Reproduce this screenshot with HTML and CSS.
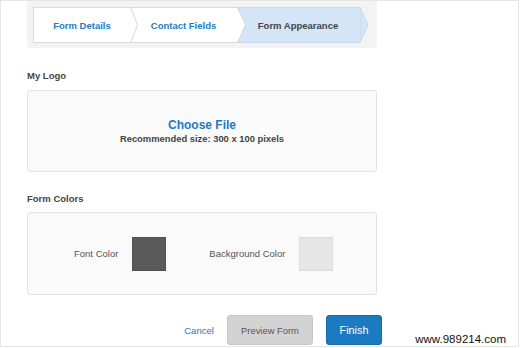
FILE: index.html
```html
<!DOCTYPE html>
<html>
<head>
<meta charset="utf-8">
<link rel="stylesheet" href="styles.css">
</head>
<body>
<div class="frame">
  <div class="steps-wrap">
    <div class="steps">
      <div class="step s1">Form Details</div>
      <svg class="sep" width="8" height="36" viewBox="0 0 8 36">
        <rect x="0" y="0" width="8" height="36" fill="#fff"/>
        <line x1="0" y1="0.5" x2="8" y2="0.5" stroke="#dadada"/>
        <line x1="0" y1="35.5" x2="8" y2="35.5" stroke="#dadada"/>
        <polyline points="0.5,0 7.5,18 0.5,36" fill="none" stroke="#d6d6d6"/>
      </svg>
      <div class="step s2">Contact Fields</div>
      <svg class="sep" width="9" height="36" viewBox="0 0 9 36">
        <rect x="0" y="0" width="9" height="36" fill="#d3e5f6"/>
        <line x1="0" y1="0.5" x2="9" y2="0.5" stroke="#c6d9ec"/>
        <line x1="0" y1="35.5" x2="9" y2="35.5" stroke="#c6d9ec"/>
        <polygon points="0,0 8.5,18 0,36" fill="#fff"/>
        <line x1="0" y1="0.5" x2="0.5" y2="0.5" stroke="#dadada"/>
        <polyline points="0.5,0 8.5,18 0.5,36" fill="none" stroke="#d6d6d6"/>
      </svg>
      <div class="step s3">Form Appearance</div>
      <svg class="sep" width="9" height="36" viewBox="0 0 9 36">
        <polygon points="0,0.5 8,18 0,35.5" fill="#d3e5f6" stroke="#c6d9ec"/>
      </svg>
    </div>
  </div>

  <div class="label">My Logo</div>
  <div class="panel logo">
    <div class="choose">Choose File</div>
    <div class="hint">Recommended size: 300 x 100 pixels</div>
  </div>

  <div class="label label-colors">Form Colors</div>
  <div class="panel colors">
    <span class="color-label">Font Color</span>
    <span class="swatch dark"></span>
    <span class="color-label gap">Background Color</span>
    <span class="swatch light"></span>
  </div>

  <div class="actions">
    <span class="cancel">Cancel</span>
    <span class="btn preview">Preview Form</span>
    <span class="btn finish">Finish</span>
  </div>

  <div class="watermark">www.989214.com</div>
</div>
</body>
</html>
```
FILE: styles.css
```css
html, body {
  margin: 0;
  padding: 0;
  background: #fff;
}

.frame {
  position: relative;
  width: 519px;
  height: 347px;
  box-sizing: border-box;
  border: 1px solid #e6e6e6;
  padding-left: 26px;
  font-family: "Liberation Sans", Arial, sans-serif;
}

.steps-wrap {
  width: 350px;
  box-sizing: border-box;
  background: #f3f3f3;
  padding: 6px 0 5px 6px;
  border-radius: 0 0 3px 3px;
}

.steps {
  display: flex;
  height: 36px;
}

.sep {
  display: block;
  flex: none;
}

.step {
  flex: none;
  height: 34px;
  border-top: 1px solid #dadada;
  border-bottom: 1px solid #dadada;
  background: #fff;
  display: flex;
  align-items: center;
  justify-content: center;
  font-size: 9.5px;
  font-weight: bold;
  color: #1d7bc2;
}

.s1 {
  width: 96px;
  border-left: 1px solid #dadada;
}

.s2 {
  width: 91px;
  padding-right: 8px;
}

.s3 {
  width: 104px;
  padding-right: 10px;
  background: #d3e5f6;
  border-color: #c6d9ec;
  color: #444;
}

.label {
  font-size: 9.5px;
  font-weight: bold;
  color: #444;
  line-height: 12px;
  margin-top: 22px;
  margin-bottom: 8px;
}

.label-colors {
  margin-top: 21px;
  margin-bottom: 7px;
}

.panel {
  width: 350px;
  box-sizing: border-box;
  border: 1px solid #e2e2e2;
  border-radius: 3px;
  background: #fafafa;
}

.logo {
  height: 82px;
  display: flex;
  flex-direction: column;
  align-items: center;
  justify-content: center;
}

.choose {
  font-size: 12px;
  font-weight: bold;
  color: #1d7bc2;
  line-height: 15px;
}

.hint {
  font-size: 9.4px;
  font-weight: bold;
  color: #444;
  line-height: 12px;
}

.colors {
  height: 83px;
  display: flex;
  align-items: center;
  padding-left: 46px;
}

.color-label {
  font-size: 9.5px;
  color: #555;
}

.color-label.gap {
  margin-left: 43px;
}

.swatch {
  width: 34px;
  height: 34px;
  box-sizing: border-box;
  margin-left: 14px;
}

.swatch.dark {
  background: #5a5a5a;
  border: 1px solid #505050;
}

.swatch.light {
  background: #e6e6e6;
  border: 1px solid #dcdcdc;
}

.actions {
  width: 355px;
  margin-top: 20px;
  display: flex;
  justify-content: flex-end;
  align-items: center;
}

.cancel {
  font-size: 9.6px;
  color: #1d7bc2;
  margin-right: 13px;
}

.btn {
  height: 30px;
  box-sizing: border-box;
  border-radius: 3px;
  display: flex;
  align-items: center;
  justify-content: center;
}

.preview {
  width: 86px;
  background: #d3d3d3;
  border: 1px solid #c6c6c6;
  color: #555;
  font-size: 9.4px;
}

.finish {
  width: 56px;
  margin-left: 13px;
  background: #1b7bc1;
  border: 1px solid #166aa8;
  color: #fff;
  font-size: 10.8px;
}

.watermark {
  position: absolute;
  right: 12px;
  bottom: 1px;
  font-size: 11.5px;
  line-height: 12px;
  color: #111;
}
```
